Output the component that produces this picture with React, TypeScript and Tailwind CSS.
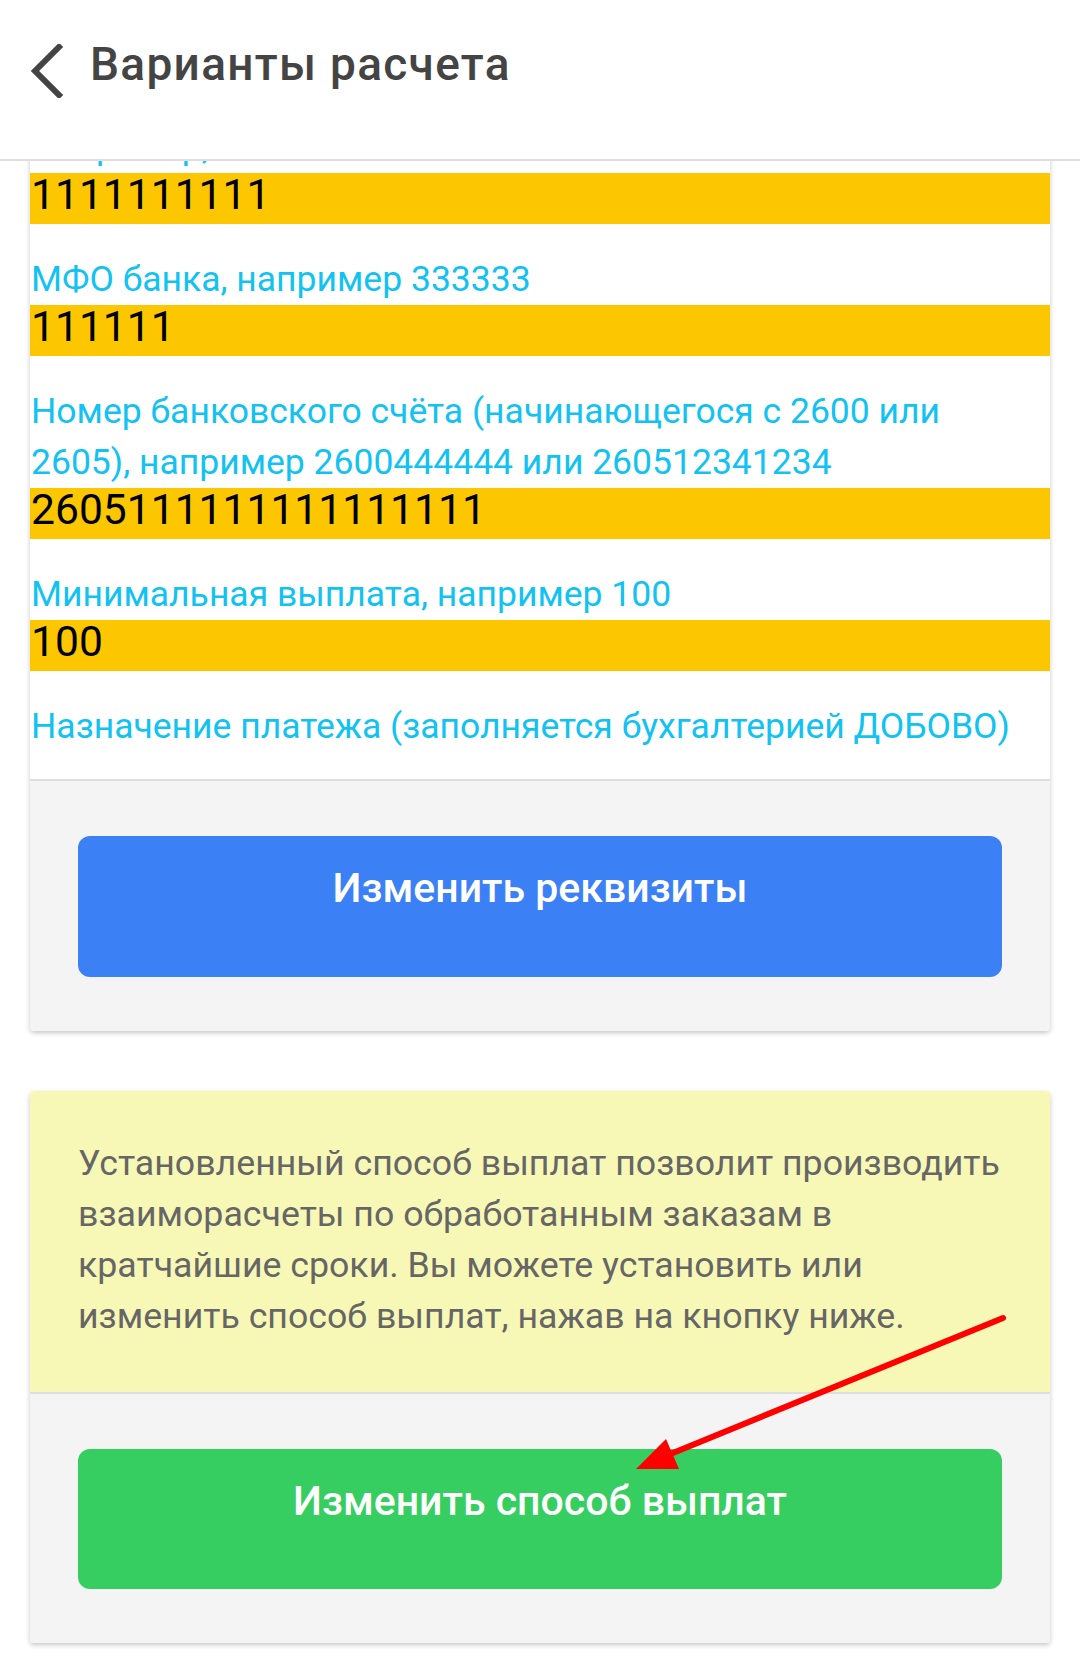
import React from "react";

const fields = [
  { label: "МФО банка, например 333333", value: "111111" },
  {
    label:
      "Номер банковского счёта (начинающегося с 2600 или 2605), например 2600444444 или 260512341234",
    value: "2605111111111111111",
  },
  { label: "Минимальная выплата, например 100", value: "100" },
];

const Header: React.FC = () => (
  <header className="relative z-10 h-[161px] bg-white border-b-2 border-[#dedede]">
    <svg
      className="absolute left-[28px] top-[44px]"
      width="36"
      height="54"
      viewBox="0 0 36 54"
      fill="none"
    >
      <path d="M31 3 L7 27 L31 51" stroke="#444" strokeWidth="6" strokeLinecap="square" />
    </svg>
    <h1 className="pl-[90px] pt-[37px] text-[46px] leading-[54px] tracking-[1.3px] font-medium text-[#444]">
      Варианты расчета
    </h1>
  </header>
);

const Label: React.FC<{ children: React.ReactNode; className?: string }> = ({ children, className }) => (
  <p className={`pl-px pr-[40px] text-[35.5px] leading-[51px] text-[#12c2f2] ${className ?? ""}`}>{children}</p>
);

const Value: React.FC<{ children: React.ReactNode }> = ({ children }) => (
  <div className="h-[51px] bg-[#fdc700] pl-px text-[42.6px] leading-[43px] text-black">{children}</div>
);

export default function App() {
  return (
    <div className="relative min-h-[1676px] bg-white font-['Roboto','Liberation_Sans',sans-serif]">
      <Header />
      <div className="overflow-hidden px-[30px] pb-[33px]">
        <div className="bg-white rounded-b-[4px] shadow-[0_2px_5px_rgba(0,0,0,0.22)]">
          <div className="pb-[27px]">
            {/* list is scrolled: only the tail of this label peeks under the header */}
            <Label className="-mt-[39px]">Например, 1234567890</Label>
            <Value>1111111111</Value>
            {fields.map((f, i) => (
              <div key={i} className="mt-[30px]">
                <Label>{f.label}</Label>
                <Value>{f.value}</Value>
              </div>
            ))}
            <Label className="mt-[30px]">Назначение платежа (заполняется бухгалтерией ДОБОВО)</Label>
          </div>
          <div className="border-t-2 border-[#dedede] bg-[#f4f4f4] px-[48px] pt-[55px] pb-[54px] rounded-b-[4px]">
            <button className="w-full h-[141px] rounded-[12px] bg-[#3b80f5] pt-[22px] flex justify-center items-start text-[41px] leading-[60px] font-medium text-white">
              Изменить реквизиты
            </button>
          </div>
        </div>

        <div className="mt-[60px] rounded-[4px] overflow-hidden shadow-[0_2px_5px_rgba(0,0,0,0.22)]">
          <div className="bg-[#f8f8b6] pl-[48px] pr-[24px] pt-[47px] pb-[50px]">
            <p className="text-[35.7px] leading-[51px] text-[#666]">
              Установленный способ выплат позволит производить взаиморасчеты по обработанным
              заказам в кратчайшие сроки. Вы можете установить или изменить способ выплат,
              нажав на кнопку ниже.
            </p>
          </div>
          <div className="border-t-2 border-[#dedede] bg-[#f4f4f4] px-[48px] pt-[55px] pb-[54px]">
            <button className="w-full h-[140px] rounded-[12px] bg-[#36cd61] pt-[22px] flex justify-center items-start text-[41px] leading-[60px] font-medium text-white">
              Изменить способ выплат
            </button>
          </div>
        </div>
      </div>

      <svg
        className="absolute inset-0 pointer-events-none"
        width="1080"
        height="1676"
        viewBox="0 0 1080 1676"
      >
        <line x1="1003" y1="1318" x2="668" y2="1455" stroke="#ff0000" strokeWidth="6" strokeLinecap="round" />
        <polygon points="636,1469 666,1439 679,1469" fill="#ff0000" />
      </svg>
    </div>
  );
}
